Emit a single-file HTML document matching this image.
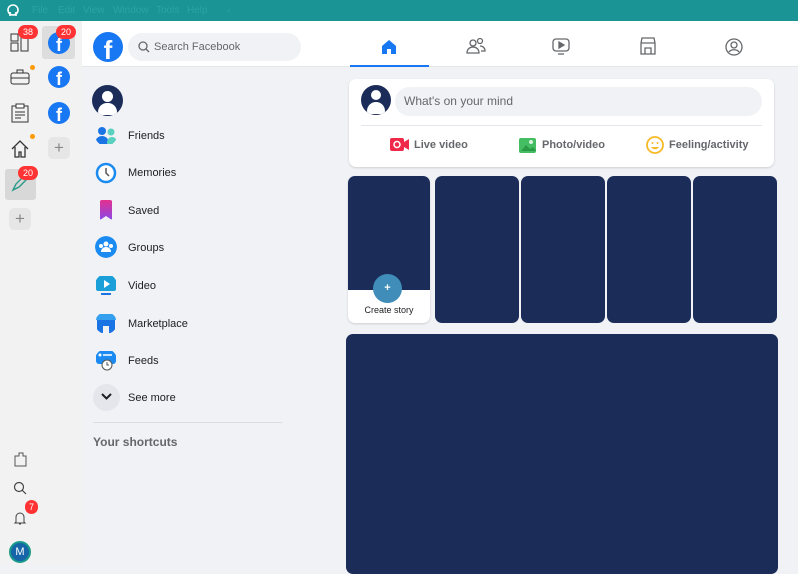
<!DOCTYPE html>
<html><head><meta charset="utf-8"><style>
*{box-sizing:border-box;margin:0;padding:0}
body{width:798px;height:565px;overflow:hidden;font-family:"Liberation Sans",sans-serif;background:#f0f2f5;position:relative}
.abs{position:absolute}
.title{left:0;top:0;width:798px;height:21px;background:#1a9494;color:#2aa5a5;font-size:10px}
.title span{position:absolute;top:5px}
.side{left:0;top:21px;width:82px;height:544px;background:#f2f2f2}
.badge{position:absolute;background:#f33;color:#fff;font-size:9px;border-radius:8px;height:14px;line-height:14px;padding:0 5px;text-align:center}
.fb{width:22px;height:22px;border-radius:50%;background:#1877f2;color:#fff;font-weight:bold;font-size:18px;text-align:center;line-height:26px;overflow:hidden}
.hdr{left:82px;top:21px;width:716px;height:46px;background:#fff;border-bottom:1px solid #e4e6ea}
.menu{left:93px;font-size:11px;color:#1c1e21;font-weight:bold}
.mi{position:absolute;left:95px;width:22px;height:22px;border-radius:50%}
.ml{position:absolute;left:128px;font-size:11px;color:#1c1e21}
.card{background:#fff;border-radius:7px;box-shadow:0 1px 2px rgba(0,0,0,.15)}
.story{background:#1c2c59;border-radius:7px;top:176px;height:147px;width:84px}
</style></head><body>
<div class="abs title">
<svg class="abs" style="left:6px;top:4px" width="14" height="13"><circle cx="7" cy="6" r="5" fill="none" stroke="#fff" stroke-width="1.6"/><path d="M4 12v-4M10 12v-4" stroke="#fff" stroke-width="1.6"/></svg>
<span style="left:32px">File</span><span style="left:58px">Edit</span><span style="left:83px">View</span><span style="left:113px">Window</span><span style="left:156px">Tools</span><span style="left:187px">Help</span><span style="left:227px">‹</span>
</div>
<div class="abs side">
<div class="abs" style="left:42px;top:5px;width:33px;height:33px;background:#ddd;border-radius:3px"></div>
<div class="abs" style="left:5px;top:148px;width:31px;height:31px;background:#d8d8d8;border-radius:3px"></div>
<svg class="abs" style="left:10px;top:12px" width="20" height="20"><rect x="1" y="1" width="7" height="7" fill="none" stroke="#333"/><rect x="1" y="10" width="7" height="8" fill="none" stroke="#333"/><rect x="11" y="1" width="7" height="17" fill="none" stroke="#333"/></svg>
<svg class="abs" style="left:10px;top:48px" width="20" height="16"><rect x="1" y="4" width="18" height="11" rx="2" fill="none" stroke="#333"/><path d="M7 4V1h6v3M1 9h18" stroke="#333" fill="none"/></svg>
<svg class="abs" style="left:11px;top:82px" width="18" height="20"><rect x="1" y="3" width="16" height="16" fill="none" stroke="#333"/><rect x="5" y="1" width="8" height="4" fill="#fff" stroke="#333"/><path d="M4 9h10M4 12h10M4 15h6" stroke="#333"/></svg>
<svg class="abs" style="left:10px;top:118px" width="20" height="20"><path d="M2 10L10 2l8 8M5 8v10h4v-5h2v5h4V8" fill="none" stroke="#333" stroke-width="1.3"/></svg>
<div class="abs" style="left:30px;top:44px;width:5px;height:5px;border-radius:50%;background:#f90"></div>
<div class="abs" style="left:30px;top:113px;width:5px;height:5px;border-radius:50%;background:#f90"></div>
<svg class="abs" style="left:11px;top:153px" width="18" height="18"><path d="M2 16l3-6 8-8 3 3-8 8z" fill="none" stroke="#2a9a8a" stroke-width="1.4"/></svg>
<div class="abs fb" style="left:48px;top:11px">f</div>
<div class="abs fb" style="left:48px;top:45px">f</div>
<div class="abs fb" style="left:48px;top:81px">f</div>
<div class="abs" style="left:48px;top:116px;width:22px;height:22px;border-radius:5px;background:#e6e6e6;color:#888;text-align:center;line-height:21px;font-size:17px">+</div>
<div class="abs" style="left:9px;top:187px;width:22px;height:22px;border-radius:5px;background:#e6e6e6;color:#888;text-align:center;line-height:21px;font-size:17px">+</div>
<div class="badge" style="left:18px;top:4px">38</div>
<div class="badge" style="left:56px;top:4px">20</div>
<div class="badge" style="left:18px;top:145px">20</div>
<svg class="abs" style="left:13px;top:431px" width="14" height="16"><path d="M2 4h4V1h4v3h3v10H2z" fill="none" stroke="#555"/></svg>
<svg class="abs" style="left:13px;top:460px" width="14" height="14"><circle cx="6" cy="6" r="4.5" fill="none" stroke="#444" stroke-width="1.2"/><path d="M9 9l4 4" stroke="#444" stroke-width="1.2"/></svg>
<svg class="abs" style="left:13px;top:490px" width="14" height="15"><path d="M3 11V6a4 4 0 018 0v5l1 1H2z M6 13h2" fill="none" stroke="#444"/></svg>
<div class="badge" style="left:25px;top:479px;padding:0 4px">7</div>
<div class="abs" style="left:9px;top:520px;width:22px;height:22px;border-radius:50%;background:#1565a8;border:2px solid #1a9a8a;color:#fff;font-size:11px;text-align:center;line-height:18px">M</div>
</div>
<div class="abs hdr">
<div class="abs fb" style="left:11px;top:11px;width:30px;height:30px;font-size:26px;line-height:36px">f</div>
<div class="abs" style="left:46px;top:12px;width:173px;height:28px;border-radius:14px;background:#f0f2f5;color:#65676b;font-size:11px;line-height:28px;padding-left:26px">Search Facebook
<svg class="abs" style="left:10px;top:8px" width="12" height="12"><circle cx="5" cy="5" r="4" fill="none" stroke="#65676b" stroke-width="1.3"/><path d="M8 8l3 3" stroke="#65676b" stroke-width="1.3"/></svg></div>
<div class="abs" style="left:268px;top:44px;width:79px;height:2px;background:#1877f2"></div>
<svg class="abs" style="left:298px;top:17px" width="18" height="18"><path d="M2 8l7-6 7 6v8H2z" fill="#1877f2"/><rect x="7" y="11" width="4" height="5" fill="#fff"/></svg>
<svg class="abs" style="left:384px;top:16px" width="20" height="18" fill="none" stroke="#65676b" stroke-width="1.3"><circle cx="7" cy="6" r="3"/><path d="M1 16c0-4 3-6 6-6s6 2 6 6z"/><circle cx="14" cy="4" r="2.5"/><path d="M14 9c3 0 5 2 5 5h-4"/></svg>
<svg class="abs" style="left:470px;top:17px" width="18" height="18" fill="none" stroke="#65676b" stroke-width="1.3"><rect x="1" y="1" width="16" height="12" rx="3"/><path d="M7 4l5 3-5 3z" fill="#65676b"/><path d="M6 16h6"/></svg>
<svg class="abs" style="left:557px;top:16px" width="18" height="18" fill="none" stroke="#65676b" stroke-width="1.3"><path d="M2 6l1-5h12l1 5M2 6v11h14V6M2 6h14M6 17v-6h6v6"/></svg>
<svg class="abs" style="left:643px;top:17px" width="18" height="18" fill="none" stroke="#65676b" stroke-width="1.3"><circle cx="9" cy="9" r="8"/><circle cx="9" cy="7" r="3"/><path d="M4 14c2-3 8-3 10 0"/></svg>
</div>
<div class="abs" style="left:92px;top:85px;width:31px;height:31px;border-radius:50%;background:#1c2c59;overflow:hidden"><div class="abs" style="left:10px;top:6px;width:11px;height:11px;border-radius:50%;background:#fff"></div><div class="abs" style="left:6px;top:18px;width:19px;height:12px;border-radius:9px 9px 3px 3px;background:#fff"></div></div>
<svg class="mi" style="top:124px" viewBox="0 0 22 22"><circle cx="7" cy="7" r="4" fill="#1b74e4"/><circle cx="16" cy="8" r="3.5" fill="#5ad0c0"/><path d="M0 20c0-6 4-8 7-8s7 2 7 8z" fill="#1b74e4"/><path d="M12 20c0-5 2-7 5-7s5 2 5 7z" fill="#5ad0c0"/></svg>
<div class="ml" style="top:130px">Friends</div>
<svg class="mi" style="top:162px" viewBox="0 0 22 22"><circle cx="11" cy="11" r="9" fill="#fff" stroke="#1b8bf2" stroke-width="2.5"/><path d="M11 6v5l3 3" stroke="#555" stroke-width="1.5" fill="none"/></svg>
<div class="ml" style="top:167px">Memories</div>
<svg class="mi" style="top:199px" viewBox="0 0 22 22"><defs><linearGradient id="g1" x1="0" y1="0" x2="0" y2="1"><stop offset="0" stop-color="#e3308f"/><stop offset="1" stop-color="#8a48e8"/></linearGradient></defs><path d="M5 1h12v20l-6-4-6 4z" fill="url(#g1)"/></svg>
<div class="ml" style="top:205px">Saved</div>
<svg class="mi" style="top:236px" viewBox="0 0 22 22"><circle cx="11" cy="11" r="11" fill="#1b8bf2"/><circle cx="11" cy="8" r="2.5" fill="#fff"/><circle cx="6" cy="10" r="2" fill="#fff"/><circle cx="16" cy="10" r="2" fill="#fff"/><path d="M6 16c0-3 2-5 5-5s5 2 5 5z" fill="#fff"/></svg>
<div class="ml" style="top:242px">Groups</div>
<svg class="mi" style="top:274px" viewBox="0 0 22 22"><rect x="1" y="2" width="20" height="15" rx="2" fill="#1b9fd8"/><path d="M9 6l6 4-6 4z" fill="#fff"/><rect x="6" y="19" width="10" height="2" fill="#1b74e4"/></svg>
<div class="ml" style="top:280px">Video</div>
<svg class="mi" style="top:312px" viewBox="0 0 22 22"><path d="M2 2h18l1 6H1z" fill="#36a0f0"/><path d="M2 8h18v13h-6v-7H8v7H2z" fill="#1b74e4"/></svg>
<div class="ml" style="top:318px">Marketplace</div>
<svg class="mi" style="top:349px" viewBox="0 0 22 22"><rect x="1" y="2" width="20" height="13" rx="3" fill="#1b8bf2"/><circle cx="5" cy="6" r="1.5" fill="#fff"/><path d="M8 6h9" stroke="#fff" stroke-width="1.5"/><circle cx="12" cy="16" r="5" fill="#fff" stroke="#555"/><path d="M12 13v3h2" stroke="#555" fill="none"/></svg>
<div class="ml" style="top:355px">Feeds</div>
<div class="abs" style="left:93px;top:384px;width:27px;height:27px;border-radius:50%;background:#e4e6eb"></div>
<svg class="abs" style="left:101px;top:393px" width="11" height="8"><path d="M1 1l4.5 4.5L10 1" fill="none" stroke="#1c1e21" stroke-width="2"/></svg>
<div class="ml" style="top:392px">See more</div>
<div class="abs" style="left:93px;top:422px;width:189px;height:1px;background:#dadde1"></div>
<div class="abs" style="left:93px;top:435px;font-size:12px;color:#65676b;font-weight:bold">Your shortcuts</div>

<div class="abs card" style="left:349px;top:79px;width:425px;height:88px">
<div class="abs" style="left:12px;top:6px;width:30px;height:30px;border-radius:50%;background:#1c2c59;overflow:hidden"><div class="abs" style="left:10px;top:5px;width:10px;height:10px;border-radius:50%;background:#fff"></div><div class="abs" style="left:6px;top:17px;width:18px;height:12px;border-radius:9px 9px 3px 3px;background:#fff"></div></div>
<div class="abs" style="left:46px;top:8px;width:367px;height:29px;border-radius:15px;background:#f0f2f5;color:#65676b;font-size:12px;line-height:29px;padding-left:9px">What's on your mind</div>
<div class="abs" style="left:12px;top:46px;width:401px;height:1px;background:#e4e6eb"></div>
<svg class="abs" style="left:41px;top:59px" width="19" height="13"><rect x="0" y="0" width="14" height="13" rx="2" fill="#f02849"/><path d="M14 4l5-3v11l-5-3z" fill="#f02849"/><circle cx="7" cy="6.5" r="3" fill="none" stroke="#fff" stroke-width="1.5"/></svg>
<div class="abs" style="left:65px;top:60px;font-size:11px;color:#65676b;font-weight:bold">Live video</div>
<svg class="abs" style="left:170px;top:57px" width="18" height="17"><rect x="0" y="2" width="17" height="15" rx="2" fill="#45bd62"/><circle cx="12" cy="6" r="2" fill="#d9f5df"/><path d="M2 15l5-6 4 4 3-2 3 4z" fill="#2a9a47"/></svg>
<div class="abs" style="left:193px;top:60px;font-size:11px;color:#65676b;font-weight:bold">Photo/video</div>
<svg class="abs" style="left:297px;top:57px" width="18" height="18"><circle cx="9" cy="9" r="8" fill="#fff" stroke="#f7b928" stroke-width="1.8"/><circle cx="6.5" cy="7" r="1" fill="#f7b928"/><circle cx="11.5" cy="7" r="1" fill="#f7b928"/><path d="M5 11c2 3 6 3 8 0z" fill="#f7b928"/></svg>
<div class="abs" style="left:320px;top:60px;font-size:11px;color:#65676b;font-weight:bold">Feeling/activity</div>
</div>

<div class="abs card" style="left:348px;top:176px;width:82px;height:147px;overflow:hidden">
<div class="abs" style="left:0;top:0;width:84px;height:114px;background:#1c2c59"></div>
<div class="abs" style="left:25px;top:98px;width:29px;height:29px;border-radius:50%;background:#3f8db8;color:#fff;text-align:center;line-height:28px;font-size:11px;font-weight:bold">+</div>
<div class="abs" style="left:0;top:129px;width:82px;text-align:center;font-size:9px;color:#1c1e21">Create story</div>
</div>
<div class="abs story" style="left:435px"></div>
<div class="abs story" style="left:521px"></div>
<div class="abs story" style="left:607px"></div>
<div class="abs story" style="left:693px"></div>
<div class="abs" style="left:346px;top:334px;width:432px;height:240px;background:#1c2c59;border-radius:7px"></div>
</body></html>
